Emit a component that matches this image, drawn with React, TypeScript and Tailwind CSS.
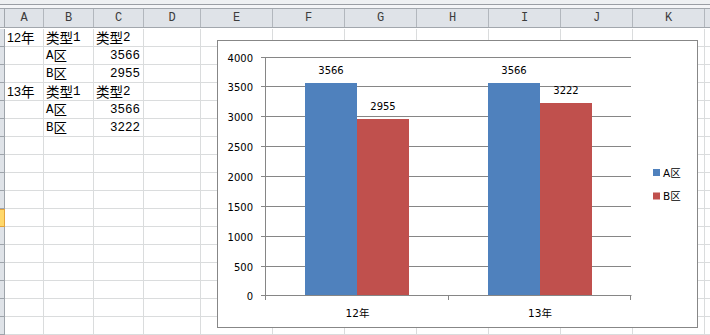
import React from "react";

const COLS = [
  { key: "A", w: "w-[39px]" },
  { key: "B", w: "w-[50px]" },
  { key: "C", w: "w-[50px]" },
  { key: "D", w: "w-[57px]" },
  { key: "E", w: "w-[72px]" },
  { key: "F", w: "w-[72px]" },
  { key: "G", w: "w-[72px]" },
  { key: "H", w: "w-[72px]" },
  { key: "I", w: "w-[72px]" },
  { key: "J", w: "w-[72px]" },
  { key: "K", w: "w-[72px]" },
  { key: "", w: "w-[72px]" },
];

// sheet content, row by row: [A, B, C]
const CELLS: string[][] = [
  ["12年", "类型1", "类型2"],
  ["", "A区", "3566"],
  ["", "B区", "2955"],
  ["13年", "类型1", "类型2"],
  ["", "A区", "3566"],
  ["", "B区", "3222"],
];

const SELECTED_ROW = 10;
const ROW_COUNT = 18;

// split into CJK / latin runs so each gets its own font
function Mixed({ text, latin }: { text: string; latin: string }) {
  const parts = text.split(/([\u4e00-\u9fff]+)/).filter(Boolean);
  return (
    <>
      {parts.map((p, i) =>
        /[\u4e00-\u9fff]/.test(p) ? (
          <span key={i} className="font-['Noto_Sans_CJK_SC',sans-serif] text-[13.5px] leading-none">
            {p}
          </span>
        ) : (
          <span key={i} className={latin}>
            {p}
          </span>
        )
      )}
    </>
  );
}

const SERIES = [
  { name: "A区", color: "#4f81bd", values: [3566, 3566] },
  { name: "B区", color: "#c0504d", values: [2955, 3222] },
];
const GRID = [254.5, 225.5, 195.5, 165.5, 135.5, 105.5, 75.5, 45.5, 16.5];
const yOf = (v: number) => 254.5 - v * 0.0596;

function Chart() {
  const groups = [
    { label: "12年", x: 87, cx: 139.5 },
    { label: "13年", x: 270, cx: 322 },
  ];
  return (
    <div className="absolute left-[217px] top-[40px] w-[481px] h-[288px] bg-white border border-[#878787]">
      <svg width="479" height="286" className="font-['DejaVu_Sans','Noto_Sans_CJK_SC',sans-serif]">
        {GRID.map((y, i) => (
          <g key={i}>
            {i > 0 && <line x1="48" x2="413" y1={y} y2={y} stroke="#868686" strokeWidth="1" />}
            <line x1="43" x2="48" y1={y} y2={y} stroke="#868686" strokeWidth="1" />
            <text x="35" y={y + 4} textAnchor="end" fontSize="10" fill="#000">
              {i * 500}
            </text>
          </g>
        ))}
        {groups.map((g, gi) =>
          SERIES.map((s, si) => {
            const v = s.values[gi];
            const top = Math.round(yOf(v));
            const x = g.x + si * 52;
            return (
              <g key={`${gi}-${si}`}>
                <rect x={x} y={top} width="52" height={254.5 - top} fill={s.color} />
                <text x={x + 26} y={top - 9.5} textAnchor="middle" fontSize="10" fill="#000">
                  {v}
                </text>
              </g>
            );
          })
        )}
        <line x1="47.5" x2="47.5" y1="16" y2="259" stroke="#868686" strokeWidth="1" />
        <line x1="47.5" x2="413.5" y1="254.5" y2="254.5" stroke="#868686" strokeWidth="1" />
        <line x1="230.5" x2="230.5" y1="254.5" y2="259" stroke="#868686" strokeWidth="1" />
        <line x1="412.5" x2="412.5" y1="254.5" y2="259" stroke="#868686" strokeWidth="1" />
        {groups.map((g) => (
          <text key={g.label} x={g.cx} y="276" textAnchor="middle" fontSize="10.5" fill="#000">
            {g.label}
          </text>
        ))}
        {SERIES.map((s, i) => (
          <g key={s.name}>
            <rect x="435" y={128 + i * 23.5} width="7" height="7" fill={s.color} />
            <text x="445" y={135.5 + i * 23.5} fontSize="10.5" fill="#000">
              {s.name}
            </text>
          </g>
        ))}
      </svg>
    </div>
  );
}

export default function App() {
  return (
    <div className="w-[710px] h-[335px] overflow-hidden bg-white relative">
      {/* formula bar remnant */}
      <div className="h-[5px] bg-[#eef0f2] border-b border-[#9a9ea4]" />
      <div className="h-[3px] bg-[#f4f5f7]" />

      {/* column headers */}
      <div className="flex h-[20px] bg-[#dfe3e8] border-t border-b border-[#a2a7ad]">
        <div className="w-[5px] shrink-0 border-r border-[#a2a7ad]" />
        {COLS.map((c, i) => (
          <div
            key={i}
            className={`${c.w} shrink-0 border-r border-[#b2b7bd] flex items-center justify-center font-['Liberation_Mono',monospace] text-[12px] text-[#3c3c3c]`}
          >
            {c.key}
          </div>
        ))}
      </div>
      <div className="h-[1px]" />

      {/* sheet rows */}
      {Array.from({ length: ROW_COUNT }).map((_, r) => {
        const row = CELLS[r] || [];
        return (
          <div key={r} className="flex h-[18px]">
            <div
              className={
                r === SELECTED_ROW
                  ? "w-[5px] shrink-0 bg-[#ffd86a] border-y border-r border-[#e2a33c]"
                  : "w-[5px] shrink-0 bg-[#dfe3e8] border-r border-b border-[#9ea4ab]"
              }
            />
            {COLS.map((c, ci) => {
              const text = row[ci] || "";
              const numeric = /^\d+$/.test(text);
              return (
                <div
                  key={ci}
                  className={`${c.w} shrink-0 border-r border-b border-[#dadcdd] flex items-end pb-[2px] whitespace-nowrap text-black ${
                    numeric ? "justify-end pr-[3px]" : "pl-[2px]"
                  }`}
                >
                  {text && (
                    <Mixed
                      text={text}
                      latin={
                        ci === 0
                          ? "font-['Liberation_Sans',sans-serif] text-[12.5px] leading-none"
                          : "font-['Liberation_Mono',monospace] text-[12.5px] leading-none"
                      }
                    />
                  )}
                </div>
              );
            })}
          </div>
        );
      })}

      <Chart />
    </div>
  );
}
